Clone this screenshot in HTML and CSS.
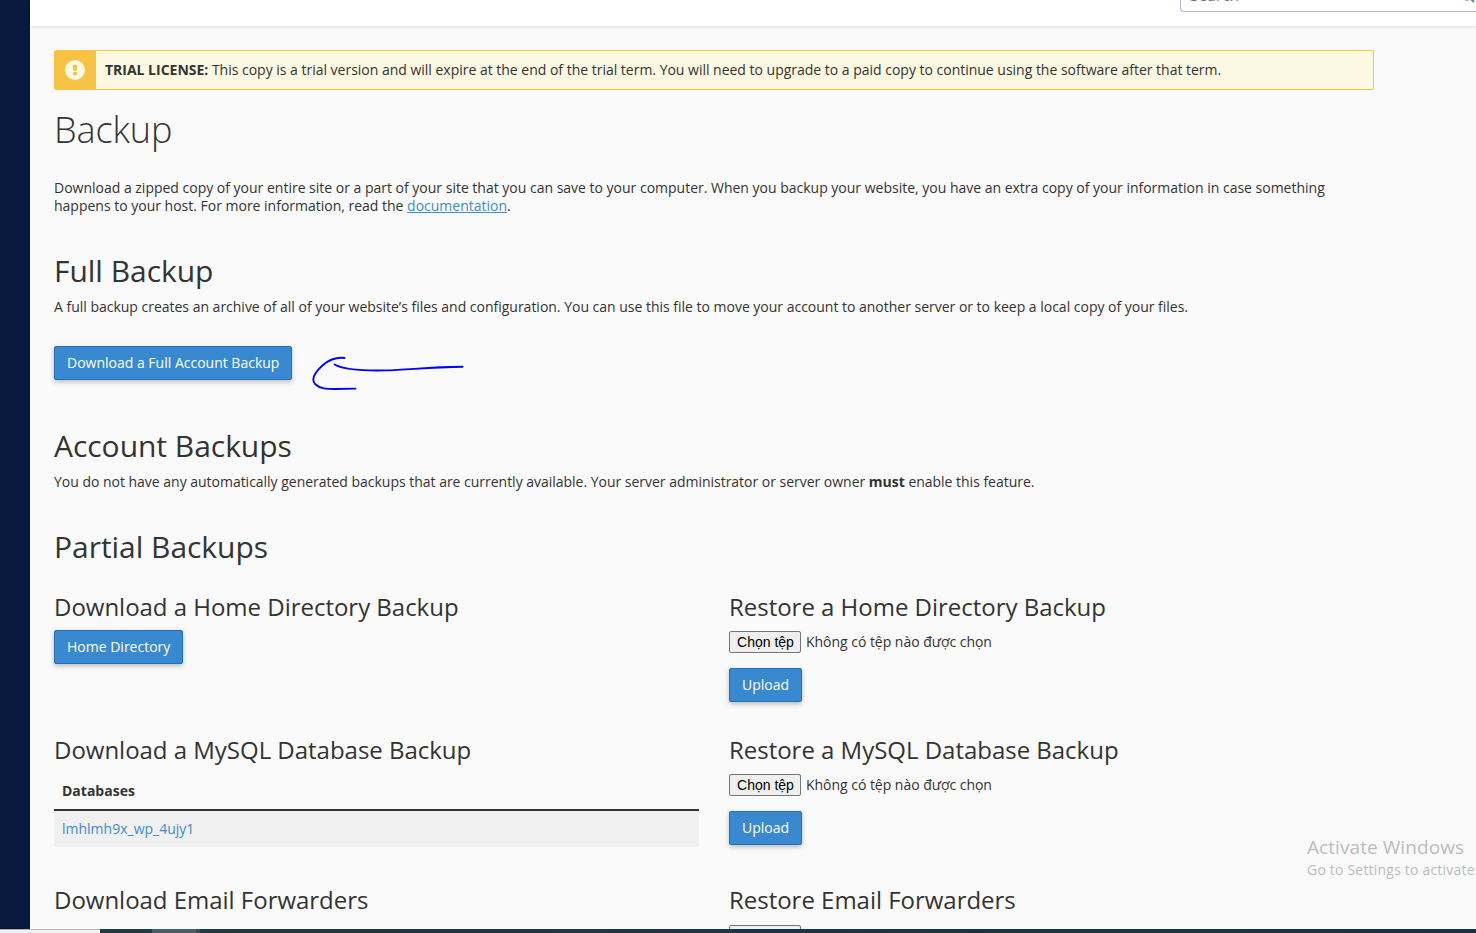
FILE: index.html
```html
<!DOCTYPE html>
<html lang="en">
<head>
<meta charset="utf-8">
<title>Backup</title>
<link rel="stylesheet" href="styles.css">
</head>
<body>
<div class="screen">
  <div class="app">
    <aside class="sidebar"></aside>
    <div class="page">
      <header class="topbar">
        <div class="search"><span>Search</span>
          <svg class="search-icon" width="14" height="14" viewBox="0 0 14 14"><circle cx="6" cy="6" r="4.6"/><path d="M9.3 9.3L13 13"/></svg>
        </div>
      </header>
      <main class="content">
        <div class="alert">
          <div class="alert-icon">
            <svg width="20" height="20" viewBox="0 0 20 20"><circle cx="10" cy="10" r="10" fill="#fdf8e1"/><path d="M7.700 5h4.600l-.7 6h-3.200z" fill="#f7c344"/><rect x="8.200" y="12" width="3.600" height="3" rx=".5" fill="#f7c344"/></svg>
          </div>
          <div class="alert-text"><strong>TRIAL LICENSE:</strong> This copy is a trial version and will expire at the end of the trial term. You will need to upgrade to a paid copy to continue using the software after that term.</div>
        </div>
        <h1>Backup</h1>
        <p class="intro">Download a zipped copy of your entire site or a part of your site that you can save to your computer. When you backup your website, you have an extra copy of your information in case something happens to your host. For more information, read the <a class="doc" href="#">documentation</a>.</p>

        <section class="full">
          <h2>Full Backup</h2>
          <p>A full backup creates an archive of all of your website’s files and configuration. You can use this file to move your account to another server or to keep a local copy of your files.</p>
          <button class="btn">Download a Full Account Backup</button>
        </section>

        <section class="account">
          <h2>Account Backups</h2>
          <p>You do not have any automatically generated backups that are currently available. Your server administrator or server owner <strong>must</strong> enable this feature.</p>
        </section>

        <section class="partial">
          <h2>Partial Backups</h2>
          <div class="row home">
            <div><h3>Download a Home Directory Backup</h3><button class="btn">Home Directory</button></div>
            <div><h3>Restore a Home Directory Backup</h3>
              <div class="file"><button class="choose">Chọn tệp</button><span>Không có tệp nào được chọn</span></div>
              <button class="btn">Upload</button></div>
          </div>
          <div class="row mysql">
            <div><h3>Download a MySQL Database Backup</h3>
              <table class="databases"><thead><tr><th>Databases</th></tr></thead><tbody><tr><td><a href="#">lmhlmh9x_wp_4ujy1</a></td></tr></tbody></table></div>
            <div><h3>Restore a MySQL Database Backup</h3>
              <div class="file"><button class="choose">Chọn tệp</button><span>Không có tệp nào được chọn</span></div>
              <button class="btn">Upload</button></div>
          </div>
          <div class="row forwarders">
            <div><h3>Download Email Forwarders</h3></div>
            <div><h3>Restore Email Forwarders</h3>
              <div class="file"><button class="choose"></button></div></div>
          </div>
        </section>
      </main>
    </div>
  </div>
  <footer class="taskbar"><div class="task-search"></div><div class="task-gap"></div><div class="task-item"></div><div class="task-edge"></div></footer>
  <svg class="ink" width="156" height="38" viewBox="0 0 156 38"><path d="M34.500 3C26 2 19 5 13 10C5 17 1 24 5 29C10 34 17 34 25 34L45.500 33.600"/><path d="M24.500 9.500C34 15 54 15.800 75 15.400C98 15 118 12 152.500 11.700"/></svg>
  <div class="watermark"><div class="wm-title">Activate Windows</div><div class="wm-sub">Go to Settings to activate</div></div>
</div>
</body>
</html>
```
FILE: styles.css
```css
* { box-sizing: border-box; }
body { margin: 0; font: 14px/18px "Open Sans", sans-serif; color: #333; background: #fafafa; overflow: hidden; }
h1, h2, h3, p { margin: 0; }
a { color: #428bca; text-decoration: none; }
.screen { position: relative; width: 1476px; height: 933px; display: flex; flex-direction: column; overflow: hidden; }
.app { height: 929px; display: flex; overflow: hidden; }
.sidebar { width: 30px; flex: none; background: #08193e; }
.page { flex: 1; min-width: 0; }
.topbar { height: 26px; background: #fff; box-shadow: 0 1px 4px rgba(0,0,0,.12); display: flex; justify-content: flex-end; }
.search { width: 296px; height: 34px; margin-top: -22px; border: 1px solid #a9b8d3; border-right: 0; border-radius: 4px 0 0 4px; padding: 7px 0 0 9px; display: flex; justify-content: space-between; color: #757575; font-size: 15.5px; line-height: 18px; }
.search-icon { fill: none; stroke: #5f7bb0; stroke-width: 2; margin-top: 3px; margin-right: 1px; }
.content { width: 1368px; padding: 24px; }
.alert { height: 40px; display: flex; border: 1px solid #f7c344; border-radius: 2px; background: #fdf8e1; }
.alert-icon { width: 41px; padding-right: 2px; background: #f7c344; display: flex; align-items: center; justify-content: center; }
.alert-text { padding: 10px 9px; white-space: nowrap; letter-spacing: -.011px; }
h1 { font-size: 36px; font-weight: 300; line-height: 40px; letter-spacing: -.1px; margin-top: 20px; }
.intro { margin-top: 29px; width: 1310px; letter-spacing: -.006px; }
.doc { text-decoration: underline; }
h2 { font-size: 30px; font-weight: 400; line-height: 40px; letter-spacing: -.03px; }
h3 { font-size: 24px; font-weight: 400; line-height: 32px; letter-spacing: -.02px; }
.full { margin-top: 36px; }
.full p, .account p { margin-top: 7px; white-space: nowrap; letter-spacing: -.012px; }
.account p { letter-spacing: -.018px; }
.full .btn { margin-top: 30px; }
.account { margin-top: 46px; }
.partial { margin-top: 36px; }
.btn { display: block; height: 34px; padding: 0 12px; border: 1px solid #2770b8; border-radius: 2px; background: #3889d0; color: #fff; font: 500 14px/18px "Open Sans", sans-serif; box-shadow: 0 2px 5px rgba(0,0,0,.26); white-space: nowrap; }
.row { display: grid; grid-template-columns: 645px 645px; column-gap: 30px; }
.home { height: 143px; margin-top: 24px; }
.mysql { height: 150px; }
.row > div > .btn { margin-top: 7px; }
.file { display: flex; align-items: center; gap: 5px; height: 22px; margin-top: 8px; letter-spacing: -.03px; }
.forwarders .file { margin-top: 9px; }
.row .file + .btn { margin-top: 15px; }
.choose { width: 72px; height: 22px; padding: 0 0 0 1px; border: 1px solid #767676; border-radius: 2px; background: #efefef; color: #000; font: 14px/18px "Liberation Sans", sans-serif; }
.databases { width: 645px; border-collapse: separate; border-spacing: 0; margin-top: 7px; }
.databases th { text-align: left; padding: 8px 8px 9px; border-bottom: 2px solid #333; height: 38px; }
.databases td { padding: 9px 8px; height: 36px; background: #f0f0f0; }
.taskbar { height: 4px; display: flex; background: linear-gradient(90deg, #203a43, #1c2e45); }
.task-search { width: 100px; background: #f2f2f2; border-top: 1px solid #b5b5b5; }
.task-gap { width: 52px; }
.task-item { width: 44px; background: #4c5f69; }
.task-edge { width: 4px; background: #3a4c57; }
.ink { position: absolute; left: 310px; top: 355px; fill: none; stroke: #00f; stroke-width: 1.9; stroke-linecap: round; }
.watermark { position: absolute; left: 1307px; top: 835px; color: #bcbcbc; white-space: nowrap; }
.wm-title { font-size: 19px; line-height: 24px; letter-spacing: .07px; }
.wm-sub { font-size: 14px; line-height: 20px; letter-spacing: .2px; margin-top: 1px; }
```
